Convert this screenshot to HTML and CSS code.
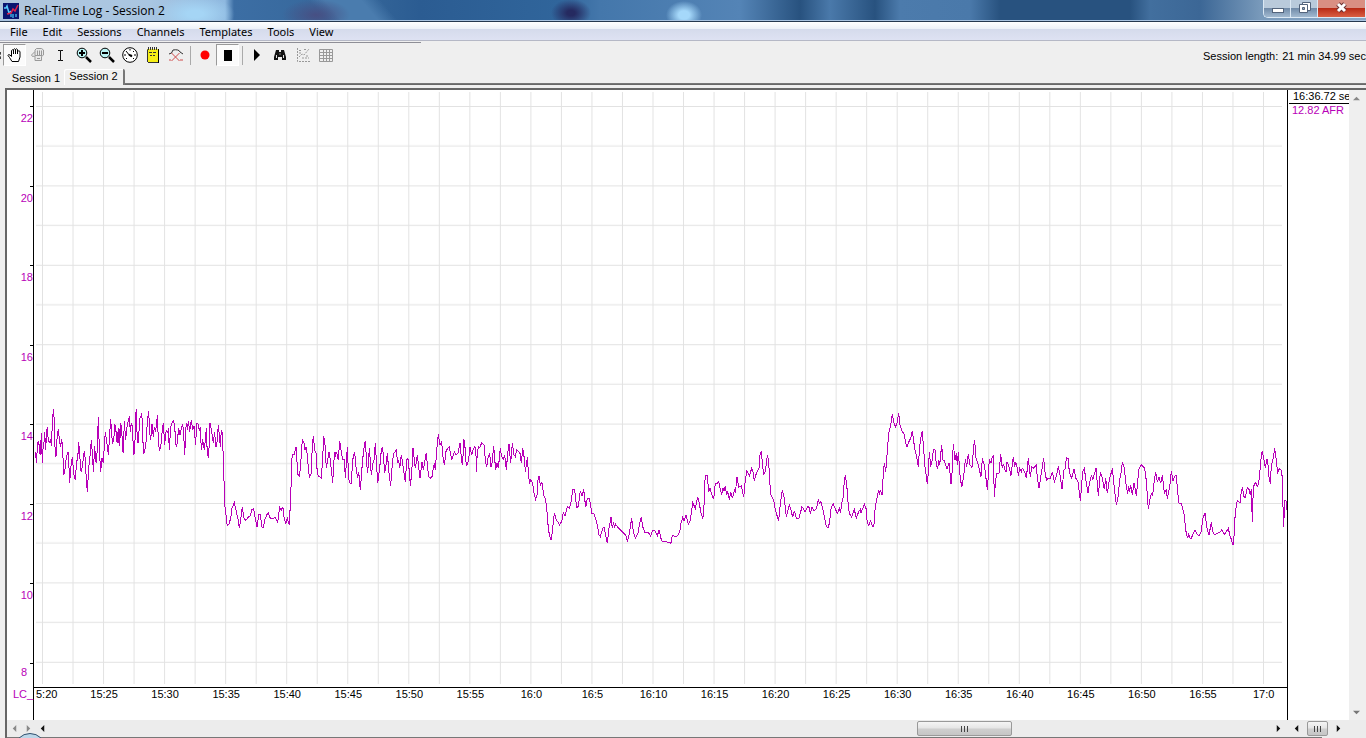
FILE: index.html
```html
<!DOCTYPE html>
<html lang="en">
<head>
<meta charset="utf-8">
<title>Real-Time Log - Session 2</title>
<link rel="stylesheet" href="styles.css">
</head>
<body>
<div class="window">
  <header class="titlebar">
    <svg class="app-icon" viewBox="0 0 16 16"><rect width="16" height="16" fill="#0a1470"/><path d="M1 5h2l1-2 2 7 2-2" stroke="#5cf" stroke-width="1.5" fill="none"/><path d="M4 11l4-1 2-4 2 2 3-6" stroke="#e0204a" stroke-width="1.5" fill="none"/><path d="M8 14v-3M10 15v-4M13 14v-3" stroke="#4be" stroke-width="1.3"/></svg>
    <h1 class="title">Real-Time Log - Session 2</h1>
    <div class="controls">
      <button class="control" aria-label="Minimize"><svg width="13" height="17" viewBox="0 0 13 17"><rect x="1.500" y="8.500" width="11" height="4" fill="#fff" stroke="#53647c"/></svg></button>
      <button class="control" aria-label="Restore"><svg width="13" height="17" viewBox="0 0 13 17"><path d="M4.500 2.500h8v8h-8z" fill="#fff" stroke="#53647c"/><path d="M1.500 4.500h8v8h-8z" fill="#fff" stroke="#53647c"/><path d="M4.500 7.500h2v2h-2z" fill="#9ab" stroke="#53647c"/></svg></button>
      <button class="control close" aria-label="Close"><svg width="13" height="17" viewBox="0 0 13 17"><path d="M3 4l7 7M10 4l-7 7" stroke="#6b3030" stroke-width="5"/><path d="M3 4l7 7M10 4l-7 7" stroke="#fff" stroke-width="3"/></svg></button>
    </div>
  </header>

  <nav class="menubar">
    <button>File</button><button>Edit</button><button>Sessions</button><button>Channels</button><button>Templates</button><button>Tools</button><button>View</button>
  </nav>

  <div class="toolbar">
    <span class="grip"></span>
    <button class="tool pressed" aria-label="Pan"><svg viewBox="0 0 16 16"><path d="M5 14.500L2.500 10.500 1 8.500Q1 7 3 8l1.500 1.500V3.500q1-1.500 2 0V7 2.500q1-1.500 2 0V7 2.500q1-1.500 2 0V7 4.500q1.500-1.500 2.500 0V10l-1.500 4.500z" fill="#fff" stroke="#000"/></svg></button>
    <button class="tool" aria-label="Grab"><svg viewBox="0 0 16 16"><path d="M5 13.500V9L2.500 9.500 1.500 8 5 4.500V3l1.500-1.500h5L13.500 3v5l-2 1.500v4zM5 4.500V8M7.500 3.500v5M9.500 3.500v5M11.500 3.500v5M5 8.500h7M7 11.500h3" fill="#e8e8e8" stroke="#999"/></svg></button>
    <button class="tool" aria-label="Text cursor"><svg viewBox="0 0 16 16"><path d="M5 3.500h2.500v10H5M10 3.500H7.500M10 13.500H7.500" fill="none" stroke="#111"/></svg></button>
    <button class="tool" aria-label="Zoom in"><svg viewBox="0 0 16 16"><path d="M10 10l5 5" stroke="#000" stroke-width="2.500"/><circle cx="6" cy="6" r="4.800" fill="#b9f4f4" stroke="#000"/><path d="M3 6h6M6 3v6" stroke="#000" stroke-width="2"/></svg></button>
    <button class="tool" aria-label="Zoom out"><svg viewBox="0 0 16 16"><path d="M10 10l5 5" stroke="#000" stroke-width="2.500"/><circle cx="6" cy="6" r="4.800" fill="#b9f4f4" stroke="#000"/><path d="M3 6h6" stroke="#000" stroke-width="2"/></svg></button>
    <button class="tool" aria-label="Gauge"><svg viewBox="0 0 16 16"><circle cx="8" cy="8" r="7.300" fill="#fff" stroke="#000"/><path d="M4 4l4 5 2-1M8 2v1.500M12 4l-1 1M14 8h-2M2 8h2M4 12l1-1M12 12l-1-1" fill="none" stroke="#000"/><path d="M7 7.500l3 2" stroke="#000" stroke-width="2"/></svg></button>
    <button class="tool" aria-label="Notes"><svg viewBox="0 0 16 16"><path d="M3 2h11v14H3z" fill="#000"/><path d="M2 2h11v13H2z" fill="#f6ef16"/><path d="M2.500 15V2.500M3 15.500h10M3.500 0v3M5.500 0v3M7.500 0v3M9.500 0v3M11.500 0v3M4 5.500h3M8 5.500h3M5 8.500h2M8 8.500h2" stroke="#333" fill="none"/></svg></button>
    <button class="tool" aria-label="Remove trace"><svg viewBox="0 0 16 16"><path d="M1 7q3 0 4-4 6-1 7 2l3 2" fill="none" stroke="#333"/><path d="M3.500 6l8 8M11.500 6l-8 8M1 13h2M12 13h3" stroke="#cf4a4a"/></svg></button>
    <span class="separator"></span>
    <button class="tool" aria-label="Record"><svg viewBox="0 0 16 16"><circle cx="8" cy="8" r="4.500" fill="#f00"/></svg></button>
    <button class="tool pressed" aria-label="Stop"><svg viewBox="0 0 16 16"><path d="M4 3h8v11H4z" fill="#000"/></svg></button>
    <span class="separator"></span>
    <button class="tool" aria-label="Play"><svg viewBox="0 0 16 16"><path d="M5 2l6 6-6 6z" fill="#000"/></svg></button>
    <button class="tool" aria-label="Find"><svg viewBox="0 0 16 16"><path d="M4 3h3v2h2V3h3l2 7v3h-4v-3H6v3H2v-3z" fill="#111"/><path d="M4.500 8v3M11.500 8v3M8 6.500v1" stroke="#ddd"/></svg></button>
    <button class="tool" aria-label="Chart"><svg viewBox="0 0 16 16"><path d="M2.500 1v13.500H15" fill="none" stroke="#999" stroke-dasharray="2 1"/><path d="M4 10l3-3 2 1 5-6M4 3.500h3M9 2.500h2M7 11h2M12 8v3M4 6h2M10 11h4" fill="none" stroke="#999" stroke-dasharray="2 1"/></svg></button>
    <button class="tool" aria-label="Table"><svg viewBox="0 0 16 16"><path d="M1.500 2.500h13v12h-13zM1.500 5.500h13M1.500 8.500h13M1.500 11.500h13M5.500 2.500v12M8.500 2.500v12M11.500 2.500v12" fill="none" stroke="#999"/></svg></button>
    <div class="length"><span>Session length:</span><span>21 min 34.99 sec</span></div>
  </div>

  <div class="tabs" role="tablist">
    <button class="tab" role="tab">Session 1</button><button class="tab active" role="tab" aria-selected="true">Session 2</button>
  </div>

  <main class="frame">
    <section class="y-axis">
      <div class="y-labels"><span></span><span>22</span><span>20</span><span>18</span><span>16</span><span>14</span><span>12</span><span>10</span><span class="low">8</span></div>
      <div class="channel">LC_</div>
    </section>
    <section class="chart">
      <svg class="plot" viewBox="34 90 1253 597" preserveAspectRatio="none" role="img" aria-label="AFR over time">
        <defs>
          <pattern id="grid-x" patternUnits="userSpaceOnUse" x="42" y="0" width="61.050" height="700"><path d="M.5 0V700M31 0V700" class="grid"/></pattern>
          <pattern id="grid-y" patternUnits="userSpaceOnUse" x="0" y="106" width="1400" height="79.400"><path d="M0 .5H1400M0 40H1400" class="grid"/></pattern>
        </defs>
        <rect x="36" y="92" width="1248" height="592" fill="url(#grid-x)"/>
        <rect x="36" y="92" width="1246" height="592" fill="url(#grid-y)"/>
        <g class="trace">
          <polyline transform="translate(0 400) scale(.33333)" points="107,155 109,190 113,130 116,122 119,155 121,165 124,100 127,190 130,125 131,145 134,95 137,150 140,92 142,82 145,125 149,128 152,118 154,138 157,72 160,27 164,72 165,140 168,170 172,100 175,88 179,125 182,140 185,118 188,145 191,225 194,215 196,200 198,180 201,165 205,155 209,250 212,205 217,172 220,205 223,235 226,238 230,182 233,180 236,125 239,160 242,210 245,213 248,190 253,152 256,180 259,240 262,275 266,205 269,180 274,120 278,175 280,215 284,138 287,185 290,188 295,52 298,150 302,215 306,175 310,188 313,135 316,95 320,125 325,165 328,120 332,58 336,115 338,132 342,110 344,75 347,78 350,125 352,95 354,130 357,85 359,138 362,70 365,85 368,150 370,160 373,62 377,120 380,85 386,55 388,52 391,95 394,68 397,80 401,162 404,160 407,45 409,28 412,128 415,128 419,58 424,45 427,60 430,160 434,155 439,120 442,62 446,32 449,98 452,120 456,72 460,110 463,82 466,92 469,82 472,45 475,120 478,150 482,145 486,100 490,68 494,135 497,100 500,92 503,100 505,85 508,150 512,80 516,68 520,62 524,75 527,130 530,142 536,85 540,105 545,80 548,72 551,100 554,165 558,82 560,70 562,90 565,62 569,95 574,60 578,90 582,78 587,135 590,70 594,72 598,90 601,82 604,150 608,118 613,150 619,85 622,165 626,172 630,68 634,90 640,128 644,95 647,140 650,140 655,75 658,105 661,140 664,90 667,100 670,180"/>
          <polyline transform="translate(220 400) scale(.33333)" points="10,180 11,240 14,250 15,320 18,345 20,370 24,376 28,370 34,345 36,325 43,308 50,340 55,360 58,385 62,360 67,320 71,352 77,362 84,352 90,348 96,328 101,326 105,350 111,382 116,345 121,345 126,382 130,382 134,360 140,345 145,340 151,355 158,356 165,352 173,367 179,322 184,330 188,322 191,332 192,350 197,373 202,355 205,365 209,376 211,290 213,265 214,215 215,180 218,165 222,165 228,140 231,185 233,222 238,228 242,200 244,155 247,120 252,130 255,150 259,140 263,180 268,232 273,222 277,140 280,108 284,150 288,160 292,220 296,228 304,235 308,175 311,112 314,118 319,205 323,180 327,155 331,180 338,248 343,165 345,155 347,165 350,158 355,180 359,122 363,150 368,178 373,178 376,235 382,142 386,235 390,250 394,250 398,180 404,155 408,200 413,235 416,215 421,270 427,190 431,150 436,122 440,190 443,218 448,145 454,225 459,188 462,180 466,130 470,200 473,250 479,205 484,150 488,142 491,180 494,218 497,205 502,160 507,220 512,258 518,180 522,160 529,150 533,190 536,180 539,205 544,165 548,190 556,245 560,180 564,175 568,215 571,258 575,220 579,145 583,180 586,205 592,165 600,235 606,185 610,210 619,158 623,205 626,230 631,235 636,230 640,205 643,190 646,210 650,150 655,102"/>
          <polyline transform="translate(430 400) scale(.33333)" points="25,102 30,135 35,125 38,165 43,195 48,155 53,145 58,140 65,180 70,165 73,155 78,165 84,160 90,130 95,185 98,195 101,120 104,122 107,180 110,198 116,180 120,140 125,165 129,150 135,140 138,165 139,215 142,155 146,140 150,142 155,128 162,135 166,180 170,202 174,175 179,160 183,200 186,190 191,138 194,175 197,210 201,190 205,205 211,145 215,170 220,178 224,165 229,210 233,160 237,132 242,190 247,130 252,165 256,170 260,150 266,155 270,160 274,190 278,145 283,175 286,215 292,172 296,230 299,248 302,240 308,250 312,280 317,298 321,285 324,240 327,228 331,255 336,248 341,285 346,295 350,320 353,365 358,405 363,420 368,390 371,350 374,342 378,358 383,365 388,375 395,365 400,338 405,348 412,320 418,325 424,302 428,270 434,270 440,322 445,320 451,272 456,288 461,268 467,322 472,295 478,295 486,340 492,342 500,365 507,405 511,410 518,385 522,382 532,430 537,385 543,352 547,385 550,370 554,382 556,372 562,380 575,393 587,405 592,425 598,400 605,355 610,395 616,415 624,400 630,365 634,352 638,380 645,398 655,398 662,408 667,392 674,390 682,408 687,390 695,424"/>
          <polyline transform="translate(640 400) scale(.33333)" points="65,424 88,427 93,430 97,405 107,410 115,405 120,390 123,370 128,352 132,362 138,345 145,373 151,362 158,308 166,325 173,290 178,310 183,340 188,355 191,340 195,240 197,228 202,228 206,275 210,265 214,278 221,298 226,250 231,250 236,245 240,265 245,285 249,265 252,272 256,258 260,285 263,272 268,300 272,275 277,295 284,268 286,280 291,230 296,262 304,258 311,292 316,240 321,212 328,228 335,205 338,210 343,243 349,220 357,205 360,165 364,153 367,190 371,222 376,215 382,165 386,180 389,245 393,285 401,300 404,320 409,340 416,363 421,310 427,270 432,290 439,350 448,315 453,330 458,352 463,332 469,355 477,355 486,320 495,335 503,320 508,322 511,343 516,320 522,332 530,325 535,298 538,310 543,305 550,335 558,375 564,385 568,370 574,320 580,312 585,325 592,340 598,325 602,338 605,310 610,290 613,240 616,225 621,265 625,320 628,340 635,352 643,328 649,355 656,335 661,328 663,338 673,313 678,325 682,370 687,376 691,362 699,382"/>
          <polyline transform="translate(860 400) scale(.33333)" points="39,382 43,368 45,330 48,308 53,285 56,270 59,280 62,272 66,286 70,220 73,188 77,215 80,180 83,140 86,100 92,75 97,42 102,70 106,82 111,68 116,38 120,75 127,95 133,103 137,130 141,140 148,122 152,115 157,93 164,145 169,165 175,200 179,140 184,105 187,93 191,150 195,200 202,253 205,215 208,155 212,200 217,180 220,148 225,150 229,195 233,208 236,180 239,195 245,135 249,180 253,182 261,207 268,188 272,250 275,250 277,190 280,132 285,180 289,160 292,195 295,155 300,225 305,262 311,230 316,178 320,200 325,162 330,195 336,202 341,140 344,120 348,175 354,192 363,230 367,175 374,200 382,270 388,178 393,190 396,175 400,165 403,292 407,240 411,220 417,220 422,162 427,205 431,192 434,207 438,217 441,185 446,195 453,227 460,170 464,202 467,185 472,205 475,227 479,205 484,215 487,205 494,215 499,235 505,175 511,232 515,200 520,205 525,200 529,195 532,235 537,265 543,225 551,175 556,225 560,240 565,235 571,235 577,215 583,245 590,225 595,198 600,225 606,268 612,210 616,205 619,173 624,175 628,215 635,235 642,208 648,235 654,245 661,302"/>
          <polyline transform="translate(1070 400) scale(.33333)" points="31,302 35,255 38,215 43,205 47,235 54,280 58,250 65,225 68,240 78,205 82,250 85,287 91,217 97,235 103,268 107,235 112,280 118,240 127,205 133,265 139,315 145,285 149,240 154,215 157,187 163,205 167,245 173,282 176,258 179,275 182,255 187,285 192,248 199,287 203,250 206,208 214,195 224,205 227,230 229,240 232,290 235,328 239,300 244,280 248,285 253,240 257,215 262,245 267,230 272,250 277,225 283,280 289,270 292,297 299,260 302,235 304,212 309,242 314,228 319,227 324,285 327,310 334,310 343,345 347,390 353,415 356,403 360,415 363,417 369,402 375,390 381,403 387,408 393,395 399,355 405,338 411,385 417,405 424,367 428,395 433,405 442,400 449,397 455,390 463,403 469,395 475,385 480,408 485,420 487,433 491,432 494,365 497,330 502,302 511,308 514,270 518,262 521,290 526,292 532,262 537,268 541,285 544,268 547,365 550,262 556,247 563,260 567,240 571,200 574,165 577,153 581,175 586,203 590,180 593,180 596,225 601,252 604,195 610,175 614,145 618,175 623,217 629,205 634,212 638,240 639,320 640,382 643,340 645,302 648,302 651,330"/>
        </g>
      </svg>
      <div class="x-labels"><span class="first">5:20</span><span>15:25</span><span>15:30</span><span>15:35</span><span>15:40</span><span>15:45</span><span>15:50</span><span>15:55</span><span>16:0</span><span>16:5</span><span>16:10</span><span>16:15</span><span>16:20</span><span>16:25</span><span>16:30</span><span>16:35</span><span>16:40</span><span>16:45</span><span>16:50</span><span>16:55</span><span class="last">17:0</span></div>
    </section>
    <aside class="readout">
      <div class="time">16:36.72 se</div>
      <div class="value">12.82 AFR</div>
    </aside>
    <div class="v-scroll">
      <button class="arrow" aria-label="Scroll up"><svg viewBox="0 0 8 8"><path d="M0 6l4-4 4 4z" fill="#888"/></svg></button>
      <button class="arrow" aria-label="Scroll down"><svg viewBox="0 0 8 8"><path d="M0 2l4 4 4-4z" fill="#777"/></svg></button>
    </div>
  </main>

  <footer class="h-scroll">
    <button class="arrow" aria-label="Channels left"><svg viewBox="0 0 8 8"><path d="M6 0L2 4l4 4z" fill="#888"/></svg></button>
    <button class="arrow" aria-label="Channels right"><svg viewBox="0 0 8 8"><path d="M2 0l4 4-4 4z" fill="#888"/></svg></button>
    <button class="arrow" aria-label="Scroll left"><svg viewBox="0 0 8 8"><path d="M6 0L2 4l4 4z" fill="#111"/></svg></button>
    <div class="track before"></div>
    <button class="thumb" aria-label="Time position"><i></i><i></i><i></i></button>
    <div class="track after"></div>
    <button class="arrow" aria-label="Scroll right"><svg viewBox="0 0 8 8"><path d="M2 0l4 4-4 4z" fill="#111"/></svg></button>
    <div class="mini-scroll">
      <button class="arrow" aria-label="Readout left"><svg viewBox="0 0 8 8"><path d="M6 0L2 4l4 4z" fill="#111"/></svg></button>
      <button class="thumb small" aria-label="Readout position"><i></i><i></i><i></i></button>
      <button class="arrow" aria-label="Readout right"><svg viewBox="0 0 8 8"><path d="M2 0l4 4-4 4z" fill="#111"/></svg></button>
    </div>
  </footer>
  <div class="orb"></div>
</div>
</body>
</html>
```

FILE: styles.css
```css
* { box-sizing: border-box; }

body {
  margin: 0;
  font: 11px/13px "Liberation Sans", Arial, sans-serif;
  color: #000;
}

button {
  margin: 0;
  padding: 0;
  border: 0;
  background: none;
  font: inherit;
  color: inherit;
}

.window {
  position: relative;
  display: flex;
  flex-direction: column;
  height: 100vh;
  overflow: hidden;
  background: #efefef;
}

/* Title bar */
.titlebar {
  display: flex;
  flex: none;
  height: 22px;
  padding-left: 3px;
  gap: 5px;
  border-bottom: 1px solid #26384f;
  box-shadow: inset 0 -1px #a9c3e0;
  background:
    radial-gradient(ellipse 20px 14px at 571px 13px, #252a60 20%, transparent),
    radial-gradient(ellipse 18px 14px at 684px 15px, #a5d8fa 30%, transparent),
    radial-gradient(ellipse 34px 16px at 316px 15px, #474f83, transparent),
    radial-gradient(ellipse 40px 18px at 195px 14px, #a5d5f5 20%, transparent),
    linear-gradient(50deg, transparent 250px, #4a7cae 262px, #4a7cae 290px, transparent 305px),
    linear-gradient(90deg, #b0c6dd, #a9c6e2 150px, #8eb8df 225px, #3c6ea4 234px, #356699 360px, #2b5c92 420px, #30659b 560px, #4477ab 600px, #5484b6 740px, #28527f 800px, #4a79aa 830px, #28527f 875px, #4c7bac 900px, #4a79aa 970px, #28527f 1000px, #28527f 1130px, #426f9e 1150px, #3c6796 1200px, #7899ba 1260px, #89a8c8);
}

.app-icon { width: 16px; height: 16px; margin-top: 3px; }

.title {
  margin: 0;
  font: 12px/21px "Open Sans", "Noto Sans", sans-serif;
  white-space: nowrap;
}

.controls {
  display: flex;
  height: 18px;
  margin-left: auto;
  border: 1px solid #dbe8f4;
  border-top: 0;
  border-right: 0;
  border-radius: 0 0 0 5px;
  overflow: hidden;
}

.control {
  display: flex;
  justify-content: center;
  width: 27px;
  border-right: 1px solid #dbe8f4;
  background: linear-gradient(#b9cadb 45%, #728ca9 50%, #a1b9d0);
}

.control.close {
  width: 48px;
  background: linear-gradient(#d98f83 45%, #b92c17 50%, #d95f43);
}

/* Menu */
.menubar {
  display: flex;
  flex: none;
  height: 19px;
  padding-left: 10px;
  gap: 15px;
  border-bottom: 1px solid #b5b8c6;
  background: linear-gradient(#fff, #edf1f8 38%, #d5dbec 40%, #dee2f2);
  font: 11px/18px "Noto Sans", sans-serif;
}

.menubar button { padding-top: 1px; }

/* Toolbar */
.toolbar {
  display: flex;
  flex: none;
  align-items: center;
  height: 28px;
  background: linear-gradient(#8e8e96, #8e8e96) 0 1px / 421px 1px no-repeat, #efefef;
}

.grip {
  width: 3px;
  height: 7px;
  border-left: 1px dashed #444;
}

.tool {
  display: grid;
  place-items: center;
  width: 23px;
  height: 22px;
}

.tool svg { width: 16px; height: 16px; }

.pressed {
  border: 1px solid;
  border-color: #999 #fff #fff #999;
  background: #fbfbfb;
}

.separator {
  width: 6px;
  height: 19px;
  background: linear-gradient(#aaa, #aaa) 3px 0 / 1px 100% no-repeat;
}

.length {
  display: flex;
  gap: 4px;
  margin-left: auto;
  padding-top: 2px;
  white-space: nowrap;
}

/* Tabs */
.tabs {
  display: flex;
  flex: none;
  align-items: flex-end;
  height: 19px;
  padding-left: 8px;
  border-bottom: 3px solid #efefef;
  background: linear-gradient(#808080, #606060) 125px 100% / 100% 2px no-repeat;
}

.tab {
  height: 13px;
  width: 56px;
}

.tab.active {
  height: 16px;
  width: 61px;
  padding-bottom: 1px;
  border: solid #777;
  border-width: 0 2px 0 0;
  border-radius: 2px 2px 0 0;
  box-shadow: inset 1px 1px #fff;
}

/* Graph */
.frame {
  display: flex;
  flex: 1;
  min-height: 0;
  margin-left: 5px;
  border: solid #666;
  border-width: 2px 0 0 2px;
  background: #fff;
}

.y-axis {
  display: flex;
  flex-direction: column;
  flex: none;
  width: 27px;
  border-right: 1px solid #000;
  color: #b800b8;
}

.y-labels {
  display: grid;
  flex: 1;
  grid-template-rows: 16fr repeat(7, 79fr) 25fr;
  text-align: right;
}

.y-labels span {
  padding-top: 6px;
  background: linear-gradient(#000, #000) 100% 0 / 3px 1px no-repeat;
}

.y-labels span:first-child { background: none; }
.y-labels .low { padding: 3px 6px 0 0; }

.channel {
  height: 32px;
  padding-left: 6px;
}

.chart {
  display: flex;
  flex-direction: column;
  flex: 1;
  min-width: 0;
  border-right: 1px solid #000;
}

.plot {
  display: block;
  flex: 1;
  width: 100%;
  min-height: 0;
  border-bottom: 1px solid #000;
}

.grid { stroke: #e2e2e2; stroke-width: 1; }

.trace polyline {
  fill: none;
  stroke: #b800b8;
  stroke-width: 1;
  vector-effect: non-scaling-stroke;
  shape-rendering: crispEdges;
}

.x-labels {
  display: grid;
  grid-template-columns: 79fr repeat(19, 122fr) 107fr;
  height: 32px;
  text-align: center;
}

.x-labels span { min-width: 0; }

.x-labels .first {
  padding-left: 2px;
  text-align: left;
}

.x-labels .last { padding-left: 7px; }

.readout {
  flex: none;
  width: 61px;
  padding-left: 1px;
  white-space: nowrap;
}

.time {
  padding-left: 4px;
  border-bottom: 1px solid #000;
}

.value {
  padding-left: 3px;
  color: #b800b8;
}

.v-scroll {
  display: flex;
  flex-direction: column;
  justify-content: space-between;
  flex: none;
  width: 17px;
  background: #efefef;
}

.arrow {
  display: grid;
  place-items: center;
  flex: none;
  width: 15px;
  height: 16px;
}

.arrow svg { width: 7px; height: 7px; }

/* Horizontal scroll bars */
.h-scroll {
  display: flex;
  flex: none;
  height: 18px;
  margin-left: 5px;
  border-left: 2px solid #666;
  background: linear-gradient(#777, #777) 0 100% / 1315px 1px no-repeat, #ececec;
}

.h-scroll > .arrow { width: 14px; }

.track.before { flex: 869; }
.track.after { flex: 259; }

.thumb {
  display: flex;
  justify-content: center;
  align-items: center;
  gap: 2px;
  flex: 94;
  height: 15px;
  margin-top: 1px;
  border: 1px solid #999;
  border-radius: 2px;
  background: linear-gradient(#f5f5f5, #e5e5e5 48%, #cfcfcf 52%, #c6c6c6);
}

.thumb i { width: 1px; height: 6px; background: #444; }
.thumb.small { flex: none; width: 21px; }

.mini-scroll {
  display: flex;
  gap: 3px;
  flex: none;
  width: 77px;
  margin-left: 4px;
}

.orb {
  position: absolute;
  left: 14px;
  bottom: -27px;
  width: 32px;
  height: 32px;
  border: 1px solid #31506d;
  border-radius: 50%;
  background: #bcd6e8;
}
```
